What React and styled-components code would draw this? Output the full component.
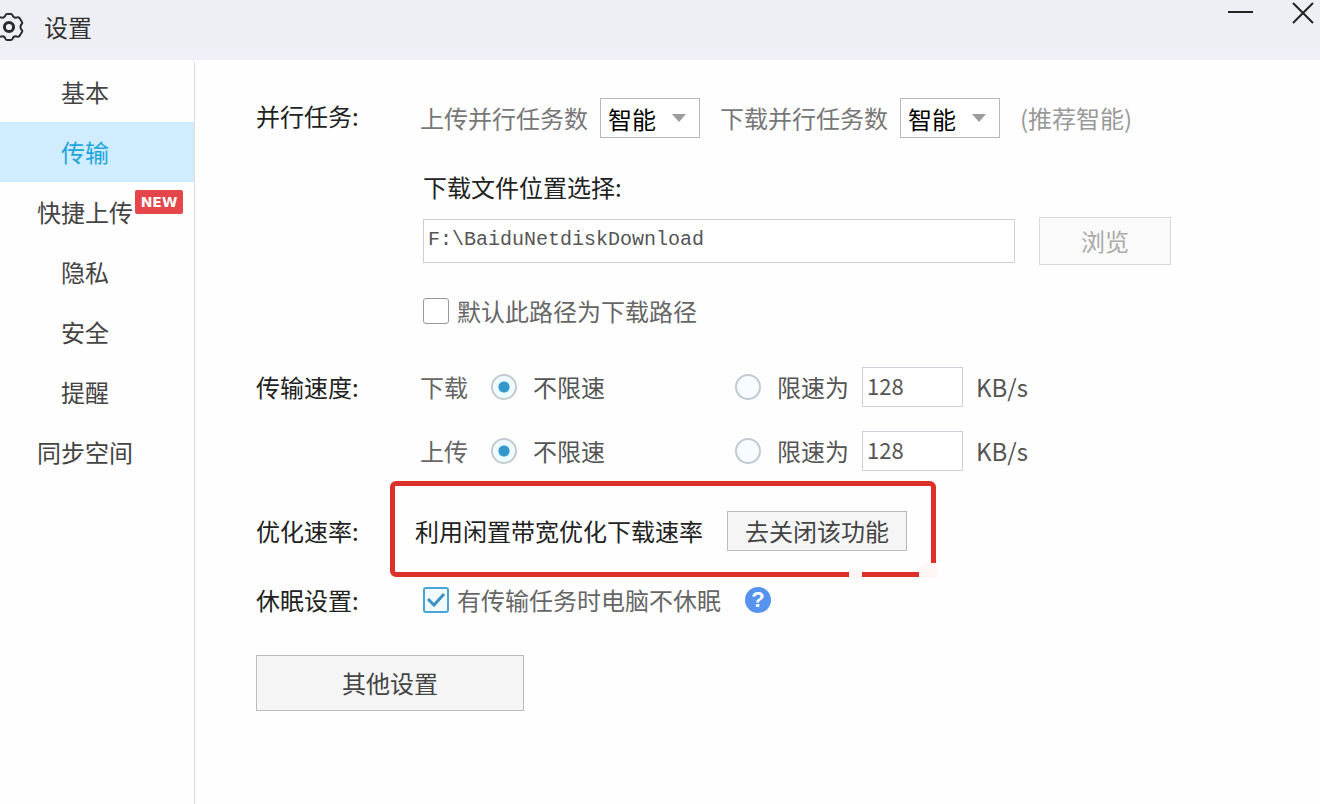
import React, { useState } from 'react';
import styled, { createGlobalStyle, css } from 'styled-components';

const sans = '"Noto Sans CJK SC", "Noto Sans", sans-serif';

const GlobalStyle = createGlobalStyle`
  *, *::before, *::after { box-sizing: border-box; }
  body { margin: 0; background: #fefefe; font-family: ${sans}; font-size: 24px; line-height: 32px; color: #555; }
  button, input, select { font: inherit; color: inherit; margin: 0; }
`;

const Window = styled.div`
  display: flex;
  flex-direction: column;
  min-height: 100vh;
`;

const TitleBar = styled.header`
  display: flex;
  align-items: flex-start;
  height: 60px;
  padding-right: 6px;
  background: linear-gradient(#eeeff4 80%, #f0eef8);
`;

const Title = styled.h1`
  display: flex;
  flex: 1;
  align-items: center;
  gap: 20px;
  margin: 0;
  height: 54px;
  font-size: 24px;
  font-weight: 400;
  color: #333;
`;

const Controls = styled.div`
  display: flex;
  gap: 39px;
`;

const ControlButton = styled.button`
  display: flex;
  padding: 0;
  border: 0;
  background: none;
  color: #222;
`;

const Body = styled.div`
  display: flex;
  flex: 1;
`;

const Sidebar = styled.nav`
  flex: none;
  width: 195px;
  margin-top: 2px;
  border-right: 1px solid #dcdce0;
`;

const NavItem = styled.a`
  display: flex;
  align-items: center;
  justify-content: center;
  height: 60px;
  padding-right: 24px;
  text-decoration: none;
  color: ${(p) => (p.$active ? '#21a5dd' : '#444')};
  background: ${(p) => (p.$active ? '#d0ecff' : 'transparent')};
`;

const NavText = styled.span`
  position: relative;
`;

const NewBadge = styled.span`
  position: absolute;
  left: 100%;
  top: -6px;
  width: 48px;
  margin-left: 2px;
  border-radius: 2px;
  background: #e4464c;
  color: #fff;
  font: bold 14px/24px "DejaVu Sans", sans-serif;
  text-align: center;
`;

const Main = styled.main`
  flex: 1;
  min-width: 0;
  padding: 38px 40px 40px 61px;
`;

const Section = styled.section`
  display: flex;
  align-items: flex-start;
  margin-bottom: ${(p) => p.$after}px;
`;

const SectionTitle = styled.h2`
  flex: none;
  width: 164px;
  margin: 0;
  font-size: 24px;
  font-weight: 400;
  line-height: ${(p) => p.$line}px;
  color: #222;
`;

const Content = styled.div`
  flex: 1;
  min-width: 0;
`;

const Row = styled.div`
  display: flex;
  align-items: center;
  min-height: 40px;
  & + & { margin-top: 24px; }
`;

const FieldLabel = styled.label`
  margin-right: 12px;
  color: #777;
`;

const SelectBox = styled.span`
  position: relative;
  width: 100px;
  margin-right: 20px;
  svg { position: absolute; right: 14px; top: 16px; pointer-events: none; }
`;

const Select = styled.select`
  display: block;
  appearance: none;
  width: 100%;
  height: 40px;
  padding: 2px 8px 0 7px;
  border: 1px solid #b8b8b8;
  border-radius: 0;
  background: #fff;
  color: #000;
`;

const Hint = styled.span`
  color: #999;
`;

const PathGroup = styled.div`
  padding-left: 3px;
  margin-top: 33px;
`;

const PathLabel = styled.label`
  display: block;
  margin-bottom: 14px;
  color: #222;
`;

const PathRow = styled.div`
  display: flex;
  align-items: center;
  gap: 24px;
  margin-bottom: 30px;
`;

const TextInput = styled.input`
  height: 40px;
  border: 1px solid #ccd0d6;
  background: #fff;
  color: #555;
  outline: none;
  ${(p) =>
    p.$path
      ? css`
          flex: 1;
          min-width: 0;
          max-width: 592px;
          height: 44px;
          padding: 0 4px 4px;
          font-family: "Liberation Mono", monospace;
          font-size: 20px;
        `
      : css`
          width: 101px;
          padding: 0 4px 4px;
          margin: 0 13px;
          font-size: 22px;
        `}
`;

const Button = styled.button`
  flex: none;
  width: ${(p) => p.$width}px;
  height: ${(p) => p.$height}px;
  padding: 0;
  border: 1px solid ${(p) => (p.disabled ? '#dadada' : '#bbb')};
  background: ${(p) => (p.disabled ? '#fafafa' : '#f5f5f6')};
  color: ${(p) => (p.disabled ? '#aaa' : '#444')};
`;

const CheckLabel = styled.label`
  position: relative;
  display: flex;
  width: fit-content;
  align-items: center;
  gap: 8px;
  color: #666;
  svg { position: absolute; left: 3px; top: 6px; pointer-events: none; }
`;

const Checkbox = styled.input`
  appearance: none;
  width: 26px;
  height: 26px;
  border: 1px solid #999;
  border-radius: 3px;
  background: #fff;
  &:checked { border: 2px solid #4aa5d5; background: #f1fbff; }
`;

const SpeedName = styled.span`
  width: 71px;
  color: #666;
`;

const RadioLabel = styled.label`
  display: inline-flex;
  align-items: center;
  gap: 16px;
  min-width: ${(p) => p.$width || 0}px;
`;

const Radio = styled.input`
  appearance: none;
  width: 26px;
  height: 26px;
  border: 2px solid #c4cad2;
  border-radius: 50%;
  background: #f8fbff;
  &:checked { background: radial-gradient(circle, #3497cb 5px, #e6faff 6px, #f4fdff 11px); }
`;

const Highlight = styled.div`
  position: relative;
  display: inline-flex;
  align-items: center;
  gap: 24px;
  height: 96px;
  margin-left: -30px;
  padding: 4px 24px 0 20px;
  border: 5px solid #dc3029;
  border-radius: 6px;
  color: #222;
  white-space: nowrap;
  &::before, &::after { content: ""; position: absolute; bottom: -6px; background: #fff6f5; }
  &::before { right: 69px; width: 13px; height: 8px; }
  &::after { right: -6px; width: 18px; height: 15px; border-radius: 8px 0 0 0; }
`;

const SleepRow = styled.div`
  display: flex;
  align-items: center;
  gap: 24px;
  padding-left: 3px;
`;

const Help = styled.button`
  width: 26px;
  height: 26px;
  padding: 0;
  border: 0;
  border-radius: 50%;
  background: #5593ee;
  color: #fff;
  font: bold 22px/26px "Liberation Sans", sans-serif;
`;

const GearIcon = () => (
  <svg width="24" height="30" viewBox="-9 -15 24 30" fill="none" stroke="#2b2b2e" strokeLinejoin="round" aria-hidden="true">
    <path strokeWidth="2" d="M-2-13H2Q3-13 3.4-12Q4.4-9 7.4-9.4Q9.5-10 10.5-9L13-5Q13.6-3.8 12.7-3Q10.2 0 12.7 3Q13.6 3.8 13 5L10.5 9Q9.5 10 7.4 9.4Q4.4 9 3.4 12Q3 13 2 13H-2Q-3 13-3.4 12Q-4.4 9-7.4 9.4Q-9.5 10-10.5 9L-13 5Q-13.6 3.8-12.7 3Q-10.2 0-12.7-3Q-13.6-3.8-13-5L-10.5-9Q-9.5-10-7.4-9.4Q-4.4-9-3.4-12Q-3-13-2-13Z" />
    <circle r="4.6" strokeWidth="3" />
  </svg>
);

const Arrow = () => (
  <svg width="14" height="8" viewBox="0 0 14 8" aria-hidden="true">
    <path d="M0 0H14L7 8Z" fill="#9c9c9c" />
  </svg>
);

const Tick = () => (
  <svg width="20" height="20" viewBox="0 0 20 20" fill="none" stroke="#3d93c6" strokeWidth="3" aria-hidden="true">
    <path d="M2 9L8 15L18 4" />
  </svg>
);

const navItems = ['基本', '传输', '快捷上传', '隐私', '安全', '提醒', '同步空间'];

function TaskSelect({ id, label }) {
  return (
    <>
      <FieldLabel htmlFor={id}>{label}</FieldLabel>
      <SelectBox>
        <Select id={id} defaultValue="智能">
          <option>智能</option>
        </Select>
        <Arrow />
      </SelectBox>
    </>
  );
}

function SpeedRow({ name, label }) {
  return (
    <Row role="radiogroup" aria-label={label}>
      <SpeedName>{label}</SpeedName>
      <RadioLabel $width={244}>
        <Radio type="radio" name={name} defaultChecked />
        不限速
      </RadioLabel>
      <RadioLabel>
        <Radio type="radio" name={name} />
        限速为
      </RadioLabel>
      <TextInput aria-label={`${label}限速`} defaultValue="128" />
      <span>KB/s</span>
    </Row>
  );
}

function CheckField({ initial = false, children }) {
  const [checked, setChecked] = useState(initial);
  return (
    <CheckLabel>
      <Checkbox type="checkbox" checked={checked} onChange={(e) => setChecked(e.target.checked)} />
      {checked && <Tick />}
      {children}
    </CheckLabel>
  );
}

export default function App() {
  return (
    <Window>
      <GlobalStyle />
      <TitleBar>
        <Title>
          <GearIcon />
          设置
        </Title>
        <Controls>
          <ControlButton aria-label="最小化">
            <svg width="25" height="24" viewBox="0 0 25 24" stroke="currentColor" strokeWidth="2">
              <path d="M0 12H25" />
            </svg>
          </ControlButton>
          <ControlButton aria-label="关闭">
            <svg width="22" height="24" viewBox="0 0 22 24" stroke="currentColor" strokeWidth="2">
              <path d="M1 3L21 23M21 3L1 23" />
            </svg>
          </ControlButton>
        </Controls>
      </TitleBar>
      <Body>
        <Sidebar>
          {navItems.map((item) => (
            <NavItem key={item} href="#" $active={item === '传输'}>
              <NavText>
                {item}
                {item === '快捷上传' && <NewBadge>NEW</NewBadge>}
              </NavText>
            </NavItem>
          ))}
        </Sidebar>
        <Main>
          <Section $after={40}>
            <SectionTitle $line={36}>并行任务:</SectionTitle>
            <Content>
              <Row>
                <TaskSelect id="upload-tasks" label="上传并行任务数" />
                <TaskSelect id="download-tasks" label="下载并行任务数" />
                <Hint>(推荐智能)</Hint>
              </Row>
              <PathGroup>
                <PathLabel htmlFor="download-path">下载文件位置选择:</PathLabel>
                <PathRow>
                  <TextInput $path id="download-path" defaultValue="F:\BaiduNetdiskDownload" />
                  <Button $width={132} $height={48} disabled>浏览</Button>
                </PathRow>
                <CheckField>默认此路径为下载路径</CheckField>
              </PathGroup>
            </Content>
          </Section>
          <Section $after={10}>
            <SectionTitle $line={40}>传输速度:</SectionTitle>
            <Content>
              <SpeedRow name="download-speed" label="下载" />
              <SpeedRow name="upload-speed" label="上传" />
            </Content>
          </Section>
          <Section $after={3}>
            <SectionTitle $line={100}>优化速率:</SectionTitle>
            <Highlight>
              利用闲置带宽优化下载速率
              <Button $width={180} $height={40}>去关闭该功能</Button>
            </Highlight>
          </Section>
          <Section $after={39}>
            <SectionTitle $line={32}>休眠设置:</SectionTitle>
            <SleepRow>
              <CheckField initial>有传输任务时电脑不休眠</CheckField>
              <Help aria-label="帮助">?</Help>
            </SleepRow>
          </Section>
          <Button $width={268} $height={56}>其他设置</Button>
        </Main>
      </Body>
    </Window>
  );
}
